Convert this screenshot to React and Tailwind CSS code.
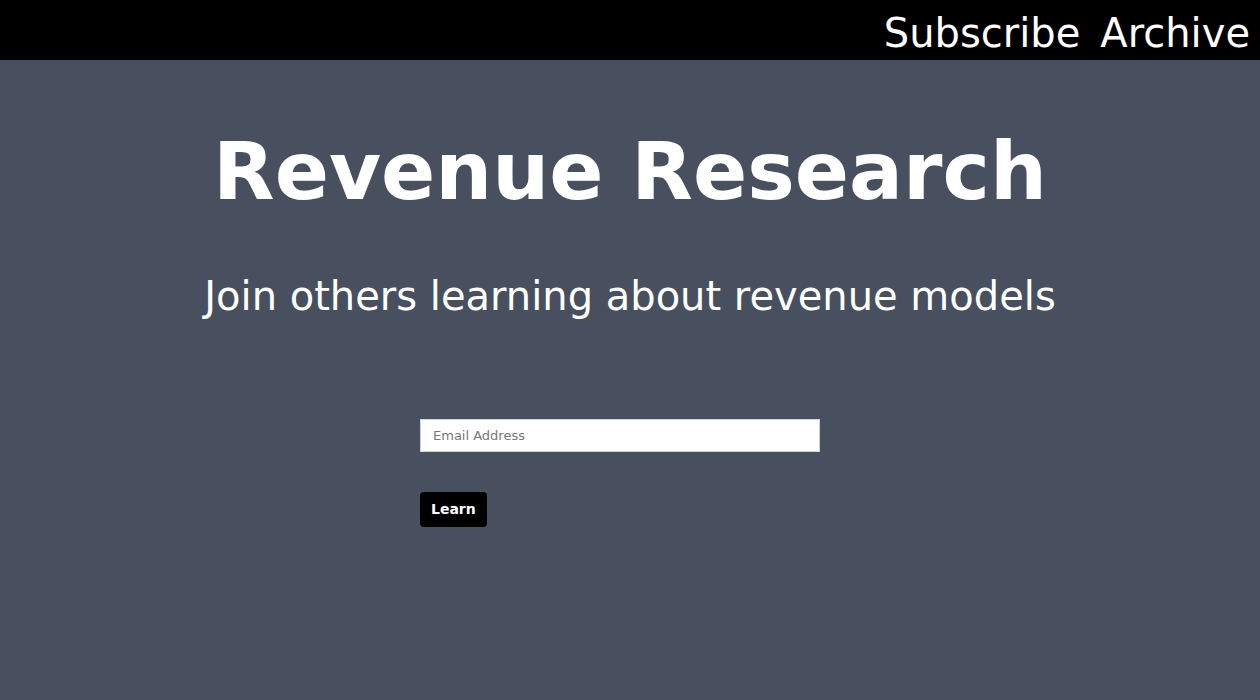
export default function App() {
  return (
    <div className="min-h-[700px] bg-[#484f5f] text-white" style={{ fontFamily: '"DejaVu Sans", sans-serif' }}>
      <header className="h-[60px] bg-black flex items-center justify-end pr-[10px] pt-[6px] gap-[20px]">
        <a className="text-[40px] leading-none text-white">Subscribe</a>
        <a className="text-[40px] leading-none text-white">Archive</a>
      </header>
      <main className="flex flex-col items-center">
        <h1 className="mt-[72px] text-[80px] font-bold leading-none">Revenue Research</h1>
        <p className="mt-[64px] text-[40px] leading-none">Join others learning about revenue models</p>
        <form className="w-[420px] mt-[103px] flex flex-col items-start" onSubmit={(e) => e.preventDefault()}>
          <input
            type="email"
            placeholder="Email Address"
            className="w-[400px] h-[33px] bg-white border border-[#cbd5e0] px-3 text-[13px] text-gray-800 placeholder:text-[#777777] outline-none"
          />
          <button type="submit" className="mt-[40px] h-[35px] px-[11px] bg-black text-white text-[14px] font-bold rounded">
            Learn
          </button>
        </form>
      </main>
    </div>
  );
}
